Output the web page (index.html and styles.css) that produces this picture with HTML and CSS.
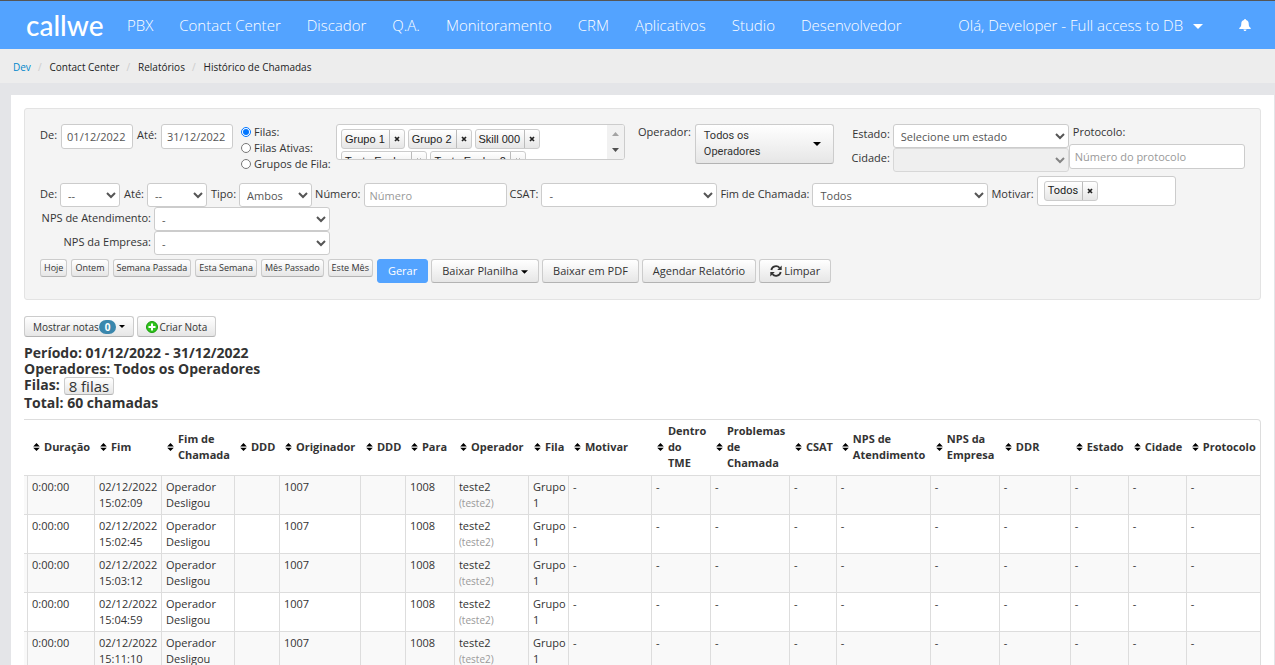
FILE: index.html
```html
<!DOCTYPE html>
<html lang="pt-BR">
<head>
  <meta charset="UTF-8">
  <meta name="viewport" content="width=device-width, initial-scale=1">
  <title>Histórico de Chamadas</title>
  <link rel="stylesheet" href="styles.css">
</head>
<body>

<!-- Shared icons -->
<svg class="sprite" aria-hidden="true">
  <symbol id="sort" viewBox="0 0 7 9"><path d="M3.5 0L6.800 3.500H.2zM3.500 8L6.800 4.800H.2z"/></symbol>
  <symbol id="caret" viewBox="0 0 8 4"><path d="M0 0h8L4 4z"/></symbol>
  <symbol id="remove" viewBox="0 0 6 6"><path d="M1 1l4 4M5 1L1 5" stroke="#222" stroke-width="1.7"/></symbol>
</svg>

<header class="navbar">
  <a class="brand" href="#">callwe</a>
  <nav class="menu">
    <a href="#">PBX</a>
    <a href="#">Contact Center</a>
    <a href="#">Discador</a>
    <a href="#">Q.A.</a>
    <a href="#">Monitoramento</a>
    <a href="#">CRM</a>
    <a href="#">Aplicativos</a>
    <a href="#">Studio</a>
    <a href="#">Desenvolvedor</a>
  </nav>
  <a class="user" href="#">Olá, Developer - Full access to DB
    <svg width="10" height="5"><use href="#caret"/></svg>
  </a>
  <button class="bell" aria-label="Notificações">
    <svg width="12" height="12" viewBox="0 0 12 12"><path d="M6 0c.6 0 1 .4 1 .9C8.800 1.300 9.700 2.700 9.700 4.500c0 2.500.7 3.700 2 4.500v1H.3V9c1.300-.8 2-2 2-4.500C2.300 2.700 3.200 1.300 5 .9 5 .4 5.400 0 6 0zM4.500 10.500h3c0 .8-.6 1.500-1.500 1.500s-1.500-.7-1.500-1.500z"/></svg>
  </button>
</header>

<ul class="breadcrumb">
  <li><a href="#">Dev</a></li>
  <li>Contact Center</li>
  <li>Relatórios</li>
  <li>Histórico de Chamadas</li>
</ul>

<main class="content">
  <form class="well" onsubmit="return false">
    <div class="row row-top">
      <label class="date-label" for="from">De:</label>
      <input class="date" type="text" id="from" value="01/12/2022">
      <label class="date-label" for="to">Até:</label>
      <input class="date" type="text" id="to" value="31/12/2022">
      <div class="radios">
        <label><input type="radio" name="queue" checked>Filas:</label>
        <label><input type="radio" name="queue">Filas Ativas:</label>
        <label><input type="radio" name="queue">Grupos de Fila:</label>
      </div>
      <div class="multi">
        <div class="chips">
          <span class="chip">Grupo 1<button aria-label="Remover"><svg width="6" height="6"><use href="#remove"/></svg></button></span>
          <span class="chip">Grupo 2<button aria-label="Remover"><svg width="6" height="6"><use href="#remove"/></svg></button></span>
          <span class="chip">Skill 000<button aria-label="Remover"><svg width="6" height="6"><use href="#remove"/></svg></button></span>
          <span class="chip">Teste Evolux<button aria-label="Remover"><svg width="6" height="6"><use href="#remove"/></svg></button></span>
          <span class="chip">Teste Evolux 2<button aria-label="Remover"><svg width="6" height="6"><use href="#remove"/></svg></button></span>
        </div>
        <div class="scroll">
          <svg width="7" height="4" viewBox="0 0 7 4"><path d="M0 4h7L3.500 0z" fill="#a3a3a3"/></svg>
          <svg width="7" height="4" viewBox="0 0 7 4"><path d="M0 0h7L3.500 4z" fill="#505050"/></svg>
        </div>
      </div>
      <span class="operator-label">Operador:</span>
      <button class="btn operator"><span>Todos os Operadores</span><svg width="8" height="4"><use href="#caret"/></svg></button>
      <div class="place">
        <label for="state">Estado:</label>
        <select class="wide" id="state"><option>Selecione um estado</option></select>
        <label for="city">Cidade:</label>
        <select class="wide" id="city" disabled><option></option></select>
      </div>
      <div class="protocol">
        <label for="protocol">Protocolo:</label>
        <input type="text" id="protocol" placeholder="Número do protocolo">
      </div>
    </div>

    <div class="row row-filters">
      <label for="hour-from">De:</label>
      <select class="hour" id="hour-from"><option>--</option></select>
      <label for="hour-to">Até:</label>
      <select class="hour" id="hour-to"><option>--</option></select>
      <label for="type">Tipo:</label>
      <select class="type" id="type"><option>Ambos</option></select>
      <label for="number">Número:</label>
      <input class="number" type="text" id="number" placeholder="Número">
      <label for="csat">CSAT:</label>
      <select class="wide" id="csat"><option>-</option></select>
      <label for="end">Fim de Chamada:</label>
      <select class="wide" id="end"><option>Todos</option></select>
      <span class="label">Motivar:</span>
      <div class="reason"><span class="chip">Todos<button aria-label="Remover"><svg width="6" height="6"><use href="#remove"/></svg></button></span></div>
    </div>

    <div class="nps">
      <label for="nps-service">NPS de Atendimento:</label>
      <select class="wide" id="nps-service"><option>-</option></select>
      <label for="nps-company">NPS da Empresa:</label>
      <select class="wide" id="nps-company"><option>-</option></select>
    </div>

    <div class="row actions">
      <button class="btn mini">Hoje</button>
      <button class="btn mini">Ontem</button>
      <button class="btn mini">Semana Passada</button>
      <button class="btn mini">Esta Semana</button>
      <button class="btn mini">Mês Passado</button>
      <button class="btn mini">Este Mês</button>
      <button class="btn primary">Gerar</button>
      <button class="btn">Baixar Planilha<svg class="drop" width="7" height="4"><use href="#caret"/></svg></button>
      <button class="btn">Baixar em PDF</button>
      <button class="btn">Agendar Relatório</button>
      <button class="btn"><svg class="refresh" width="12" height="12" viewBox="0 0 12 12"><path d="M1.300 5A4.800 4.800 0 0 1 9.600 2.800M10.700 7A4.800 4.800 0 0 1 2.400 9.200" fill="none" stroke="#333" stroke-width="1.800"/><path d="M11.700.5V5H7.200zM.3 11.500V7h4.500z" fill="#333"/></svg>Limpar</button>
    </div>
  </form>

  <div class="notes">
    <button class="btn small">Mostrar notas <span class="badge">0</span><svg width="6" height="3" viewBox="0 0 8 4"><path d="M0 0h8L4 4z"/></svg></button>
    <button class="btn small"><svg class="add" width="12" height="12" viewBox="0 0 12 12"><circle cx="6" cy="6" r="5.500" fill="#2fc41c" stroke="#1b9a0e"/><path d="M6 2.500v7M2.500 6h7" stroke="#fff" stroke-width="2"/></svg>Criar Nota</button>
  </div>

  <div class="summary">
    <div>Período: 01/12/2022 - 31/12/2022</div>
    <div>Operadores: Todos os Operadores</div>
    <div class="queues">Filas: <button class="btn count">8 filas</button></div>
    <div>Total: 60 chamadas</div>
  </div>

  <table class="calls">
    <colgroup id="cols"></colgroup>
    <thead><tr id="head"></tr></thead>
    <tbody id="rows"></tbody>
  </table>
</main>

<script>
// Column title and its share of the table width
const columns = [
  ["", 3], ["Duração", 67], ["Fim", 67], ["Fim de Chamada", 73], ["DDD", 45],
  ["Originador", 81], ["DDD", 45], ["Para", 49], ["Operador", 74], ["Fila", 40],
  ["Motivar", 83], ["Dentro do TME", 59], ["Problemas de Chamada", 79], ["CSAT", 47],
  ["NPS de Atendimento", 94], ["NPS da Empresa", 69], ["DDR", 71], ["Estado", 58],
  ["Cidade", 58], ["Protocolo", 74]
];
const times = ["15:02:09", "15:02:45", "15:03:12", "15:04:59", "15:11:10"];
const total = columns.reduce((sum, col) => sum + col[1], 0);

document.getElementById("cols").innerHTML = columns
  .map(col => `<col style="width:${col[1] / total * 100}%">`).join("");

document.getElementById("head").innerHTML = columns
  .map(col => col[0]
    ? `<th><div class="sorter"><svg width="7" height="9"><use href="#sort"/></svg><span>${col[0]}</span></div></th>`
    : "<th></th>").join("");

document.getElementById("rows").innerHTML = times.map(time => {
  const cells = ["", "0:00:00", `02/12/2022 ${time}`, "Operador Desligou", "", "1007", "", "1008",
    "teste2<small>(teste2)</small>", "Grupo 1"].concat(Array(10).fill("-"));
  return `<tr>${cells.map(cell => `<td>${cell}</td>`).join("")}</tr>`;
}).join("");
</script>
</body>
</html>
```

FILE: styles.css
```css
* {
  box-sizing: border-box;
}

body {
  margin: 0;
  background: #e4e5e8;
  color: #333;
  font-family: "Open Sans", sans-serif;
  font-size: 11px;
  line-height: 16px;
  overflow: hidden;
}

a {
  color: #0088cc;
  text-decoration: none;
}

svg {
  flex: none;
}

.sprite {
  position: absolute;
  width: 0;
  height: 0;
}

/* Top bar */
.navbar {
  display: flex;
  align-items: center;
  height: 49px;
  padding: 0 24px 0 26px;
  border-top: 1px solid #555;
  background: #53a3ff;
}

.navbar a {
  color: #fff;
  font-size: 15px;
  font-weight: 300;
  line-height: 20px;
  white-space: nowrap;
}

.navbar .brand {
  width: 101px;
  font-family: Lato, sans-serif;
  font-size: 28px;
  font-weight: 500;
  line-height: 32px;
}

.menu {
  display: flex;
  gap: 26px;
}

.navbar .user {
  margin-left: auto;
}

.user svg {
  margin: 0 0 2px 6px;
  fill: #fff;
}

.bell {
  display: flex;
  margin-left: 36px;
  padding: 0;
  border: 0;
  background: none;
  fill: #fff;
}

.breadcrumb {
  display: flex;
  margin: 0;
  padding: 10px 13px 8px;
  background: #ededed;
  list-style: none;
  color: #222;
  font-size: 10px;
}

.breadcrumb li + li::before {
  content: "/";
  padding: 0 8px 0 7px;
  color: #ccc;
}

.content {
  margin: 12px 1px 0 11px;
  padding: 13px;
  background: #fff;
}

/* Filters */
.well {
  padding: 15px 15px 16px;
  border: 1px solid #e3e3e3;
  border-radius: 3px;
  background: #f4f4f4;
}

.row {
  display: flex;
}

input[type="text"],
select,
.multi,
.reason {
  border: 1px solid #ccc;
  border-radius: 3px;
  background: #fff;
  color: #555;
  font-family: "Open Sans", sans-serif;
  font-size: 11px;
}

input[type="text"] {
  height: 25px;
  padding: 0 5px;
}

input::placeholder {
  color: #999;
}

select {
  height: 24px;
  padding: 0 3px;
}

select:disabled {
  background: #eee;
}

.wide {
  width: 176px;
}

.row-top {
  min-height: 52px;
}

.date-label {
  flex: none;
  margin: 3px 4px 0 0;
}

.row-top .date {
  width: 72px;
  margin-right: 4px;
}

.radios {
  display: flex;
  flex-direction: column;
  width: 95px;
  margin-left: 4px;
}

.radios label {
  display: flex;
  align-items: center;
  gap: 3px;
  white-space: nowrap;
}

.radios input {
  width: 10px;
  height: 10px;
  margin: 0;
}

.multi {
  display: flex;
  width: 289px;
  height: 36px;
  overflow: hidden;
}

.chips {
  display: flex;
  flex: 1;
  flex-wrap: wrap;
  align-content: flex-start;
  gap: 2px 3px;
  padding: 4px;
}

.chip {
  display: flex;
  height: 20px;
  padding-left: 3px;
  border: 1px solid #ccc;
  border-radius: 3px;
  background: linear-gradient(#fff, #e6e6e6);
  color: #222;
  font-family: "Liberation Sans", sans-serif;
  font-size: 11px;
  line-height: 18px;
  white-space: nowrap;
}

.chip button {
  display: flex;
  align-items: center;
  margin-left: 4px;
  padding: 0 4px;
  border: 0;
  border-left: 1px solid #bbb;
  background: none;
}

.scroll {
  display: flex;
  flex-direction: column;
  align-items: center;
  justify-content: space-between;
  width: 17px;
  padding: 7px 0;
  background: #f1f1f1;
}

.operator-label {
  margin: 0 4px 0 13px;
}

.btn {
  height: 24px;
  padding: 0 10px;
  border: 1px solid #ccc;
  border-bottom-color: #b3b3b3;
  border-radius: 3px;
  background: linear-gradient(#fff, #e6e6e6);
  color: #333;
  font-family: "Open Sans", sans-serif;
  font-size: 11px;
  line-height: 16px;
  white-space: nowrap;
}

.operator {
  display: flex;
  align-items: center;
  justify-content: space-between;
  width: 139px;
  height: 40px;
  padding: 0 12px 0 8px;
  font-family: Roboto, sans-serif;
  text-align: left;
  white-space: normal;
}

.operator span {
  width: 80px;
}

.place {
  display: grid;
  grid-template-columns: 40px 176px;
  column-gap: 3px;
  align-content: start;
  margin-left: 16px;
  line-height: 20px;
}

.place label,
.nps label {
  text-align: right;
}

.protocol {
  display: flex;
  flex-direction: column;
  gap: 4px;
  width: 176px;
}

.protocol label {
  padding-left: 4px;
}

.row-filters {
  align-items: flex-end;
}

.row-filters label,
.row-filters .label {
  margin: 0 3px 5px;
  white-space: nowrap;
}

.row-filters label:first-child {
  margin-left: 0;
}

.hour {
  width: 60px;
  margin-right: 1px;
}

.type {
  width: 73px;
}

.row-filters .number {
  width: 143px;
  height: 24px;
}

.reason {
  display: flex;
  width: 139px;
  height: 30px;
  margin-bottom: 1px;
  padding: 4px 6px;
}

.reason .chip {
  font-family: Roboto, sans-serif;
}

.nps {
  display: grid;
  grid-template-columns: 111px 176px;
  column-gap: 3px;
  line-height: 22px;
}

.actions {
  flex-wrap: wrap;
  gap: 3px;
  margin-top: 4px;
}

.mini {
  height: 18px;
  margin-right: 1px;
  padding: 0 3px;
  font-size: 9px;
  line-height: 12px;
}

.primary {
  border-color: #53a3ff;
  background: #53a3ff;
  color: #fff;
}

.drop {
  margin: 0 0 1px 3px;
}

.refresh {
  margin-right: 2px;
  vertical-align: -2px;
}

.notes {
  display: flex;
  gap: 3px;
  margin: 16px 0 8px;
}

.small {
  display: flex;
  align-items: center;
  height: 21px;
  padding: 0 8px;
  font-size: 10px;
}

.badge {
  margin-right: 3px;
  padding: 0 6px;
  border-radius: 8px;
  background: #3a87ad;
  color: #fff;
  font-size: 10px;
  font-weight: 700;
  line-height: 14px;
}

.add {
  margin-right: 1px;
}

.summary {
  font-size: 14px;
  font-weight: 700;
}

.queues {
  display: flex;
  gap: 4px;
}

.count {
  height: 18px;
  padding: 0 4px;
  font-size: 15px;
}

/* Calls report */
.calls {
  width: 100%;
  margin-top: 8px;
  border: 1px solid #ddd;
  border-left: 0;
  border-radius: 0 4px 0 0;
  border-spacing: 0;
  table-layout: fixed;
}

.calls th {
  padding: 3px 3px 4px 6px;
  text-align: left;
}

.calls th:first-child,
.calls td:first-child {
  padding: 0;
  border-left: 0;
}

.sorter {
  display: flex;
  align-items: center;
  gap: 4px;
}

.calls td {
  padding: 3px 3px 3px 4px;
  border-top: 1px solid #ddd;
  border-left: 1px solid #ddd;
  vertical-align: top;
}

.calls td:nth-child(10) {
  padding-right: 0;
}

.calls tr:nth-child(odd) td {
  background: #f9f9f9;
}

.calls small {
  display: block;
  color: #999;
  font-size: 10px;
}
```
